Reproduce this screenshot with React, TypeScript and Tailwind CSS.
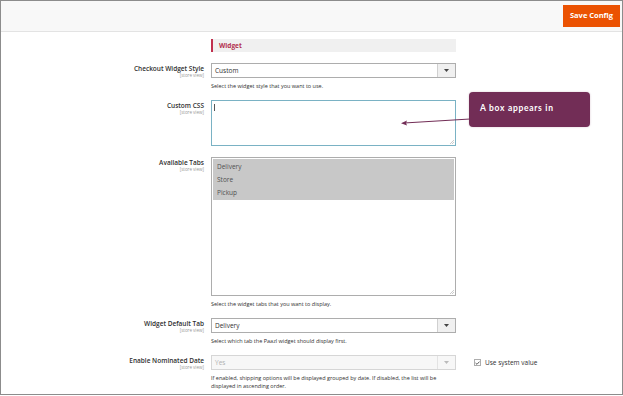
import React from 'react';

const Label = ({ title }: { title: string }) => (
  <div className="w-[203px] shrink-0 pt-[2px] text-right">
    <div className="text-[6.5px] font-semibold leading-[8px] text-[#303030]">{title}</div>
    <div className="text-[4.5px] leading-[5px] text-[#999]">[store view]</div>
  </div>
);

const Hint = ({ children }: { children: React.ReactNode }) => (
  <div className="mt-[4px] text-[5.5px] leading-[8px] text-[#303030]">{children}</div>
);

const Select = ({ value, disabled }: { value: string; disabled?: boolean }) => (
  <div
    className={`flex h-[15px] w-[245px] items-center border ${
      disabled ? 'border-[#d6d6d6] bg-[#f7f7f7]' : 'border-[#adadad] bg-white'
    }`}
  >
    <span className={`flex-1 pl-[3px] text-[6.5px] ${disabled ? 'text-[#b0b0b0]' : 'text-[#303030]'}`}>{value}</span>
    <span
      className={`flex h-full w-[18px] items-center justify-center border-l ${
        disabled ? 'border-[#e3e3e3] bg-[#f7f7f7]' : 'border-[#d0d0d0] bg-[#f0f0f0]'
      }`}
    >
      <svg width="5" height="3" viewBox="0 0 5 3">
        <path d="M0 0h5L2.5 3z" fill={disabled ? '#bbb' : '#444'} />
      </svg>
    </span>
  </div>
);

export default function App() {
  return (
    <div className="relative h-[395px] w-[623px] overflow-hidden border border-[#8c8c8c] bg-white font-['Open_Sans',sans-serif]">
      <div className="flex h-[31px] items-start justify-end border-b border-[#e3e3e3] bg-[#f8f8f8] pr-[2px] pt-[4px]">
        <button className="h-[22px] w-[57px] bg-[#eb5202] text-[7.5px] font-bold text-white">Save Config</button>
      </div>

      <div className="pt-[7px]">
        <div className="ml-[210px] flex h-[13px] w-[245px] items-center border-l-2 border-[#c0304e] bg-[#f0f0f0] pl-[6px] text-[6.5px] font-bold text-[#b3304e]">
          Widget
        </div>

        <div className="mt-[11px] flex gap-[7px]">
          <Label title="Checkout Widget Style" />
          <div>
            <Select value="Custom" />
            <Hint>Select the widget style that you want to use.</Hint>
          </div>
        </div>

        <div className="mt-[10px] flex gap-[7px]">
          <Label title="Custom CSS" />
          <div className="relative h-[46px] w-[245px] border border-[#7ab2c4] bg-white">
            <div className="absolute left-[2px] top-[3px] h-[7px] w-px bg-[#555]" />
            <svg className="absolute bottom-[1px] right-[1px]" width="4" height="4" viewBox="0 0 4 4">
              <path d="M4 0L0 4M4 2L2 4" stroke="#aaa" strokeWidth="0.6" />
            </svg>
          </div>
        </div>

        <div className="mt-[11px] flex gap-[7px]">
          <Label title="Available Tabs" />
          <div>
            <div className="relative h-[139px] w-[245px] border border-[#adadad] bg-white p-[1px]">
              <div className="bg-[#c8c8c8] text-[6.5px] leading-[13px] text-[#505050]">
                <div className="pl-[4px] pt-[1px]">Delivery</div>
                <div className="pl-[4px]">Store</div>
                <div className="pl-[4px] pb-[1px]">Pickup</div>
              </div>
              <svg className="absolute bottom-[1px] right-[1px]" width="4" height="4" viewBox="0 0 4 4">
                <path d="M4 0L0 4M4 2L2 4" stroke="#aaa" strokeWidth="0.6" />
              </svg>
            </div>
            <Hint>Select the widget tabs that you want to display.</Hint>
          </div>
        </div>

        <div className="mt-[10px] flex gap-[7px]">
          <Label title="Widget Default Tab" />
          <div>
            <Select value="Delivery" />
            <Hint>Select which tab the Paazl widget should display first.</Hint>
          </div>
        </div>

        <div className="mt-[10px] flex gap-[7px]">
          <Label title="Enable Nominated Date" />
          <div>
            <Select value="Yes" disabled />
            <div className="mt-[4px] w-[232px] text-[5.5px] leading-[8px] text-[#303030]">
              If enabled, shipping options will be displayed grouped by date. If disabled, the list will be displayed in ascending order.
            </div>
          </div>
          <div className="ml-[11px] mt-[4px] flex h-[7px] items-center gap-[4px]">
            <span className="flex h-[7px] w-[7px] items-center justify-center border border-[#adadad] bg-white">
              <svg width="5" height="4" viewBox="0 0 5 4">
                <path d="M0.5 2L2 3.3L4.5 0.6" fill="none" stroke="#333" strokeWidth="0.8" />
              </svg>
            </span>
            <span className="text-[6.5px] text-[#303030]">Use system value</span>
          </div>
        </div>
      </div>

      <div className="absolute left-[468px] top-[91px] flex h-[35px] w-[121px] items-start rounded-[4px] bg-[#722d56] pl-[11px] pt-[10px] font-['Lato',sans-serif] text-[8.5px] font-bold tracking-[0.7px] text-white shadow-[0_0_2px_rgba(114,45,86,0.3)]">
        A box appears in
      </div>
      <svg className="absolute left-[398px] top-[115px]" width="72" height="12" viewBox="0 0 72 12">
        <path d="M71 3L5 7" stroke="#722d56" strokeWidth="1" />
        <path d="M2 7.2L8 4.5L7 7L8 9.6z" fill="#722d56" />
      </svg>
    </div>
  );
}
